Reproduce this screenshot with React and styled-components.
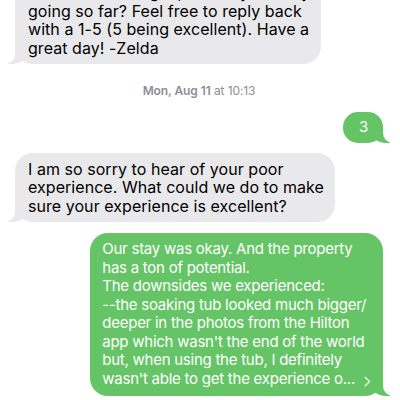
import React from "react";
import styled, { createGlobalStyle, css } from "styled-components";

const GlobalStyle = createGlobalStyle`
  html, body { margin: 0; padding: 0; background: #ffffff; }
  body { font-family: "Inter", "Noto Sans", sans-serif; -webkit-font-smoothing: antialiased; }
`;

const GRAY = "#e9e9eb";
const GREEN = "#65c466";

const Thread = styled.div`
  width: 400px;
  height: 400px;
  overflow: hidden;
  display: flex;
  flex-direction: column;
  justify-content: flex-end;
  padding: 0 17px 4px 15px;
  box-sizing: border-box;
`;

const Row = styled.div`
  display: flex;
  justify-content: ${(p) => (p.$out ? "flex-end" : "flex-start")};
  margin-top: ${(p) => p.$gap || 0}px;
`;

const Bubble = styled.div`
  position: relative;
  box-sizing: border-box;
  padding: ${(p) => p.$pad || "7px 11px 7px 13px"};
  border-radius: ${(p) => p.$radius || 18}px;
  line-height: 18.5px;
  ${(p) =>
    p.$out
      ? css`
          background: ${GREEN};
          color: #ffffff;
          font-size: 15px;
          letter-spacing: -0.25px;
          &::before {
            content: "";
            position: absolute;
            bottom: 0;
            right: -7px;
            width: 20px;
            height: 18px;
            background: ${GREEN};
            border-bottom-left-radius: 16px 14px;
          }
          &::after {
            content: "";
            position: absolute;
            bottom: 0;
            right: -10px;
            width: 10px;
            height: 20px;
            background: #ffffff;
            border-bottom-left-radius: 10px;
          }
        `
      : css`
          background: ${GRAY};
          color: #000000;
          font-size: 16px;
          letter-spacing: 0.05px;
          &::before {
            content: "";
            position: absolute;
            bottom: 0;
            left: -7px;
            width: 20px;
            height: 18px;
            background: ${GRAY};
            border-bottom-right-radius: 16px 14px;
          }
          &::after {
            content: "";
            position: absolute;
            bottom: 0;
            left: -10px;
            width: 10px;
            height: 20px;
            background: #ffffff;
            border-bottom-right-radius: 10px;
          }
        `}
`;

const Line = styled.span`
  display: block;
  white-space: nowrap;
  position: relative;
  z-index: 1;
`;

const Centered = styled(Line)`
  text-align: center;
  min-width: 13px;
`;

const Stamp = styled.div`
  text-align: center;
  font-size: 12px;
  line-height: 14px;
  color: #8e8e93;
  letter-spacing: -0.1px;
  margin: 20px 0 14px;
  b { font-weight: 600; }
`;

const More = styled.svg`
  display: inline-block;
  width: 7px;
  height: 11px;
  margin-left: 9px;
  vertical-align: -3px;
`;

const Lines = ({ lines, children }) =>
  lines.map((l, i) => (
    <Line key={i}>
      {l}
      {i === lines.length - 1 ? children : null}
    </Line>
  ));

export default function App() {
  return (
    <>
      <GlobalStyle />
      <Thread>
        <Row>
          <Bubble>
            <Lines
              lines={[
                "Hi! Just checking in, how is your stay",
                "going so far? Feel free to reply back",
                "with a 1-5 (5 being excellent). Have a",
                "great day! -Zelda",
              ]}
            />
          </Bubble>
        </Row>
        <Stamp>
          <b>Mon, Aug 11</b> at 10:13
        </Stamp>
        <Row $out>
          <Bubble $out $radius={15} $pad="6px 13px 6px 14px">
            <Centered>3</Centered>
          </Bubble>
        </Row>
        <Row $gap={10}>
          <Bubble>
            <Lines
              lines={[
                "I am so sorry to hear of your poor",
                "experience. What could we do to make",
                "sure your experience is excellent?",
              ]}
            />
          </Bubble>
        </Row>
        <Row $out $gap={11}>
          <Bubble $out $pad="7px 12px 8px 12px">
            <Lines
              lines={[
                "Our stay was okay. And the property",
                "has a ton of potential.",
                "The downsides we experienced:",
                "--the soaking tub looked much bigger/",
                "deeper in the photos from the Hilton",
                "app which wasn't the end of the world",
                "but, when using the tub, I definitely",
                "wasn't able to get the experience o...",
              ]}
            >
              <More viewBox="0 0 7 11" aria-hidden="true">
                <path
                  d="M1.2 1.2 L5.6 5.5 L1.2 9.8"
                  fill="none"
                  stroke="rgba(255,255,255,0.85)"
                  strokeWidth="1.4"
                  strokeLinecap="round"
                  strokeLinejoin="round"
                />
              </More>
            </Lines>
          </Bubble>
        </Row>
      </Thread>
    </>
  );
}
